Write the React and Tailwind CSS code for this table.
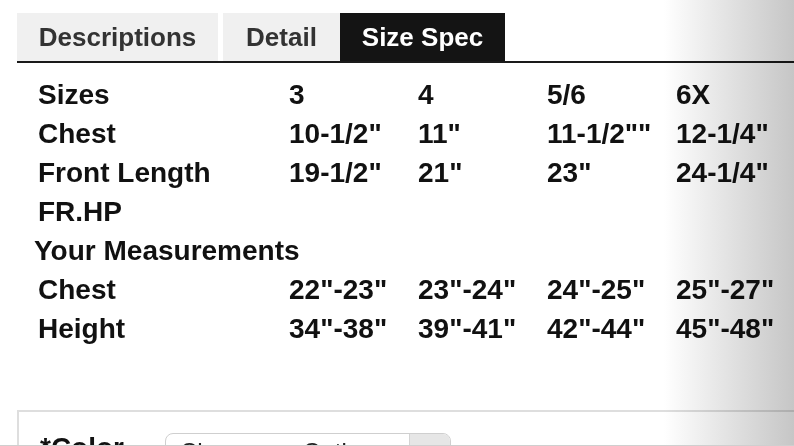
const sizeRows = [
  ["Sizes", "3", "4", "5/6", "6X"],
  ["Chest", "10-1/2\"", "11\"", "11-1/2\"\"", "12-1/4\""],
  ["Front Length", "19-1/2\"", "21\"", "23\"", "24-1/4\""],
  ["FR.HP", "", "", "", ""],
];

const measureRows = [
  ["Chest", "22\"-23\"", "23\"-24\"", "24\"-25\"", "25\"-27\""],
  ["Height", "34\"-38\"", "39\"-41\"", "42\"-44\"", "45\"-48\""],
];

function Row({ cells }) {
  return (
    <div className="flex h-[39px] items-center leading-[39px]">
      <div className="w-[251px] shrink-0">{cells[0]}</div>
      {cells.slice(1).map((c, i) => (
        <div key={i} className="w-[129px] shrink-0 whitespace-nowrap">{c}</div>
      ))}
    </div>
  );
}

export default function App() {
  return (
    <div className="relative w-[794px] h-[446px] overflow-hidden bg-white font-['Liberation_Sans',Arial,sans-serif]">
      <div className="pl-[17px] pt-[13px]">
        {/* tabs */}
        <div className="flex h-[48px] items-stretch">
          <div className="w-[201px] bg-[#f0f0f0] text-[#333] text-[26px] font-bold flex items-center justify-center">Descriptions</div>
          <div className="w-[117px] ml-[5px] bg-[#f0f0f0] text-[#333] text-[26px] font-bold flex items-center justify-center">Detail</div>
          <div className="w-[165px] bg-[#141414] text-white text-[26px] font-bold flex items-center justify-center">Size Spec</div>
        </div>
        <div className="h-[2px] bg-[#1a1a1a]" />

        {/* size table */}
        <div className="pl-[21px] pt-[12px] text-[28px] font-bold text-[#111]">
          {sizeRows.map((r, i) => <Row key={i} cells={r} />)}
          <div className="h-[39px] leading-[39px] -ml-1">Your Measurements</div>
          {measureRows.map((r, i) => <Row key={i} cells={r} />)}
        </div>

        {/* options box */}
        <div className="mt-[62px] h-[60px] border-t-2 border-l-2 border-[#dedede] flex items-start pt-[21px] pl-[21px]">
          <div className="w-[125px] mt-[-3px] text-[28px] font-bold text-[#111] leading-[36px]">*Color</div>
          <div className="flex h-[36px] w-[286px] rounded-[8px] border border-[#cfcfcf] overflow-hidden">
            <div className="flex-1 pl-[14px] text-[24px] leading-[36px] text-[#222] whitespace-nowrap overflow-hidden">Choose an Option</div>
            <div className="w-[41px] bg-[#e6e6e6] border-l border-[#d4d4d4]" />
          </div>
        </div>
      </div>

      {/* page edge shading */}
      <div className="pointer-events-none absolute inset-y-0 right-0 w-[130px] bg-gradient-to-r from-white to-[#c6c6c6] mix-blend-multiply" />
      <div className="absolute bottom-0 inset-x-0 h-px bg-[#cfcfcf]" />
    </div>
  );
}
